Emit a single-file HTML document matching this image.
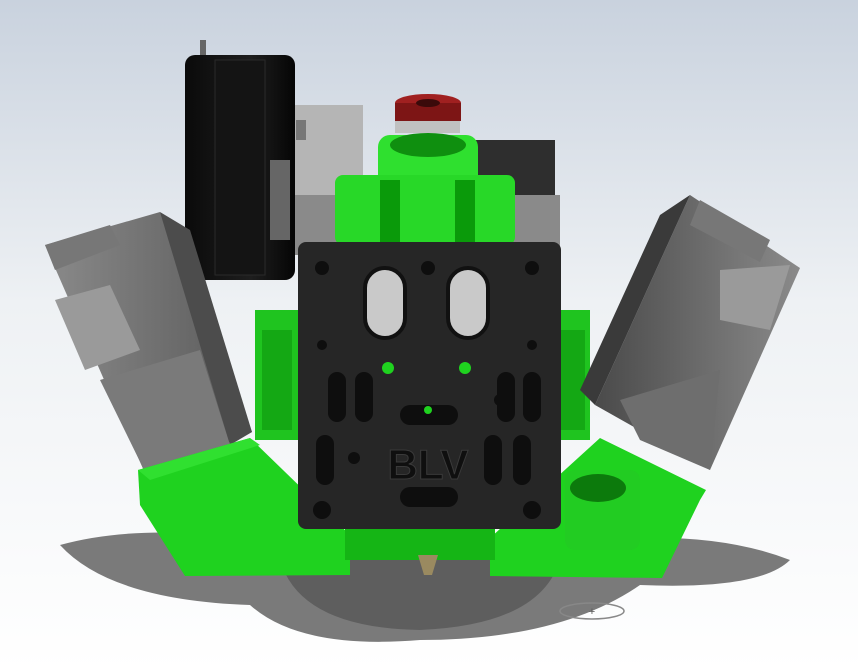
<!DOCTYPE html>
<html><head><meta charset="utf-8"><style>
html,body{margin:0;padding:0;width:858px;height:670px;overflow:hidden;background:#fff}
svg{display:block}
</style></head><body>
<svg width="858" height="670" viewBox="0 0 858 670" xmlns="http://www.w3.org/2000/svg">
<defs>
<linearGradient id="bg" x1="0" y1="0" x2="0" y2="1">
<stop offset="0" stop-color="#c9d2de"/><stop offset="0.45" stop-color="#eef1f4"/><stop offset="1" stop-color="#ffffff"/>
</linearGradient>
<linearGradient id="pul" x1="0" y1="0" x2="1" y2="0">
<stop offset="0" stop-color="#0a0a0a"/><stop offset="0.6" stop-color="#1e1e1e"/><stop offset="1" stop-color="#050505"/>
</linearGradient>
<linearGradient id="fl" x1="0" y1="0" x2="1" y2="0">
<stop offset="0" stop-color="#8a8a8a"/><stop offset="1" stop-color="#5a5a5a"/>
</linearGradient>
<linearGradient id="fr" x1="0" y1="0" x2="1" y2="0">
<stop offset="0" stop-color="#4a4a4a"/><stop offset="1" stop-color="#8a8a8a"/>
</linearGradient>
</defs>
<rect width="858" height="670" fill="url(#bg)"/>
<!-- shadow -->
<path d="M60 545 Q150 520 290 545 L560 545 Q700 525 790 560 Q760 590 640 585 Q560 640 420 640 Q300 650 250 605 Q110 600 60 545Z" fill="#7a7a7a"/>
<path d="M280 560 L560 560 Q540 625 420 630 Q300 628 280 560Z" fill="#5e5e5e"/>
<!-- grey back block -->
<rect x="288" y="105" width="75" height="100" fill="#b5b5b5"/>
<rect x="296" y="120" width="10" height="20" fill="#777"/>
<rect x="470" y="140" width="85" height="95" fill="#2e2e2e"/>
<rect x="290" y="195" width="270" height="60" fill="#8a8a8a"/>
<!-- pulley -->
<rect x="200" y="40" width="6" height="20" fill="#666"/>
<rect x="185" y="55" width="110" height="225" rx="10" fill="url(#pul)"/>
<rect x="215" y="60" width="50" height="215" fill="#141414" stroke="#2a2a2a"/>
<rect x="270" y="160" width="20" height="80" fill="#666"/>
<!-- green middle behind -->
<rect x="255" y="310" width="335" height="130" fill="#1fc41f"/>
<rect x="262" y="330" width="30" height="100" fill="#14a814"/>
<rect x="555" y="330" width="30" height="100" fill="#14a814"/>
<!-- left fan -->
<path d="M45 245 L160 212 L252 432 L148 480Z" fill="url(#fl)"/>
<path d="M160 212 L190 230 L252 432 L230 445Z" fill="#4c4c4c"/>
<path d="M45 245 L110 225 L120 245 L55 270Z" fill="#777"/>
<path d="M55 300 L110 285 L140 350 L85 370Z" fill="#9a9a9a"/>
<path d="M100 380 L200 350 L230 445 L148 478Z" fill="#7a7a7a"/>
<!-- right fan -->
<path d="M690 195 L800 268 L710 470 L595 405Z" fill="url(#fr)"/>
<path d="M690 195 L660 215 L580 390 L595 405Z" fill="#3a3a3a"/>
<path d="M700 200 L770 240 L760 262 L690 225Z" fill="#777"/>
<path d="M720 270 L790 265 L770 330 L720 320Z" fill="#9a9a9a"/>
<path d="M620 400 L720 370 L710 470 L640 440Z" fill="#6e6e6e"/>
<!-- green base -->
<path d="M138 470 L250 438 L350 535 L350 575 L185 576 L140 505Z" fill="#1fd21f"/>
<path d="M138 470 L250 438 L260 445 L150 480Z" fill="#30e030"/>
<path d="M600 438 L706 490 L700 500 L662 578 L490 576 L490 538Z" fill="#1fd21f"/>
<rect x="345" y="500" width="150" height="60" fill="#15b515"/>
<!-- clamp right -->
<rect x="565" y="470" width="75" height="80" rx="10" fill="#22cc22"/>
<ellipse cx="598" cy="488" rx="28" ry="14" fill="#0c7a0c"/>
<!-- green top -->
<rect x="378" y="135" width="100" height="110" rx="12" fill="#2fe02f"/>
<ellipse cx="428" cy="145" rx="38" ry="12" fill="#0f8f0f"/>
<rect x="335" y="175" width="180" height="70" rx="8" fill="#28d828"/>
<rect x="380" y="180" width="20" height="70" fill="#0a9a0a"/>
<rect x="455" y="180" width="20" height="70" fill="#0a9a0a"/>
<!-- red cap -->
<rect x="395" y="113" width="65" height="20" fill="#c0c0c0"/>
<ellipse cx="428" cy="103" rx="33" ry="9" fill="#a02020"/>
<rect x="395" y="103" width="66" height="18" fill="#7d1515"/>
<ellipse cx="428" cy="103" rx="12" ry="4" fill="#3a0a0a"/>
<!-- black plate -->
<rect x="298" y="242" width="263" height="287" rx="8" fill="#262626"/>
<rect x="365" y="268" width="40" height="70" rx="20" fill="#c9c9c9" stroke="#111" stroke-width="4"/>
<rect x="448" y="268" width="40" height="70" rx="20" fill="#c9c9c9" stroke="#111" stroke-width="4"/>
<g fill="#0e0e0e">
<circle cx="322" cy="268" r="7"/><circle cx="532" cy="268" r="7"/><circle cx="428" cy="268" r="7"/>
<circle cx="322" cy="345" r="5"/><circle cx="532" cy="345" r="5"/>
<circle cx="322" cy="510" r="9"/><circle cx="532" cy="510" r="9"/>
<circle cx="354" cy="458" r="6"/><circle cx="500" cy="400" r="6"/>
<rect x="328" y="372" width="18" height="50" rx="9"/><rect x="355" y="372" width="18" height="50" rx="9"/>
<rect x="497" y="372" width="18" height="50" rx="9"/><rect x="523" y="372" width="18" height="50" rx="9"/>
<rect x="316" y="435" width="18" height="50" rx="9"/><rect x="484" y="435" width="18" height="50" rx="9"/>
<rect x="513" y="435" width="18" height="50" rx="9"/>
<rect x="400" y="405" width="58" height="20" rx="10"/><rect x="400" y="487" width="58" height="20" rx="10"/>
</g>
<circle cx="388" cy="368" r="6" fill="#1fd21f"/><circle cx="465" cy="368" r="6" fill="#1fd21f"/>
<circle cx="428" cy="410" r="4" fill="#1fd21f"/>
<text x="428" y="479" text-anchor="middle" font-family="Liberation Sans, sans-serif" font-weight="bold" font-size="42" fill="#0f0f0f" stroke="#3a3a3a" stroke-width="1">BLV</text>
<!-- nozzle -->
<path d="M418 555 L438 555 L432 575 L424 575Z" fill="#9a8a60"/>
<!-- coord marker -->
<ellipse cx="592" cy="611" rx="32" ry="8" fill="none" stroke="#888" stroke-width="1.5"/>
<text x="592" y="615" text-anchor="middle" font-family="Liberation Sans, sans-serif" font-size="11" fill="#555">+</text>
</svg>
</body></html>
